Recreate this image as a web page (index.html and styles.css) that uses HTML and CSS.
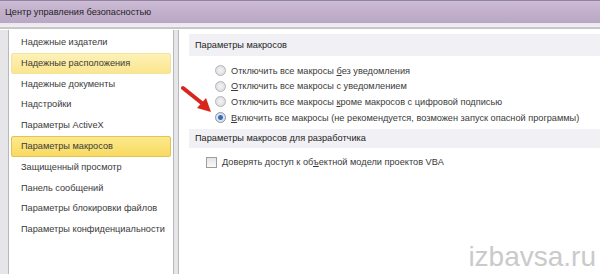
FILE: index.html
```html
<!DOCTYPE html>
<html lang="ru">
<head>
    <meta charset="UTF-8">
    <title>Центр управления безопасностью</title>
    <link rel="stylesheet" href="styles.css">
</head>
<body>
    <div class="window">
        <div class="titlebar">Центр управления безопасностью</div>
        <div class="strip"></div>
        <div class="body">
            <ul class="sidebar">
                <li>Надежные издатели</li>
                <li class="hover">Надежные расположения</li>
                <li>Надежные документы</li>
                <li>Надстройки</li>
                <li>Параметры ActiveX</li>
                <li class="active">Параметры макросов</li>
                <li>Защищенный просмотр</li>
                <li>Панель сообщений</li>
                <li>Параметры блокировки файлов</li>
                <li>Параметры конфиденциальности</li>
            </ul>
            <div class="main">
                <div class="section-title">Параметры макросов</div>
                <div class="options">
                    <label class="radio"><span class="dot"></span><span>Отключить все макросы <u>б</u>ез уведомления</span></label>
                    <label class="radio"><span class="dot"></span><span><u>О</u>тключить все макросы с уведомлением</span></label>
                    <label class="radio"><span class="dot"></span><span>Отключить все макросы <u>к</u>роме макросов с цифровой подписью</span></label>
                    <label class="radio checked"><span class="dot"></span><span><u>В</u>ключить все макросы (не рекомендуется, возможен запуск опасной программы)</span></label>
                </div>
                <div class="section-title small">Параметры макросов для разработчика</div>
                <div class="options dev">
                    <label class="check"><span class="box"></span><span>Доверять доступ к об<u>ъ</u>ектной модели проектов VBA</span></label>
                </div>
                <!-- красная стрелка поверх содержимого -->
                <svg class="arrow" width="34" height="30" viewBox="0 0 34 30">
                    <path d="M2 3 L22 19" stroke="#d8261c" stroke-width="4" stroke-linecap="round"/>
                    <path d="M16 23 L30 27 L25 13 Z" fill="#d8261c"/>
                </svg>
                <div class="watermark">izbavsa.ru</div>
            </div>
        </div>
    </div>
</body>
</html>
```

FILE: styles.css
```css
body {
    margin: 0;
    padding: 0;
    font-family: "Liberation Sans", Arial, sans-serif;
    font-size: 9.2px;
    color: #2b2b2b;
    overflow: hidden;
}
.window {
    width: 600px;
    height: 274px;
    display: flex;
    flex-direction: column;
    background-color: #dcd8e0;
}
.titlebar {
    height: 23px;
    line-height: 25px;
    padding-left: 5px;
    font-size: 9.2px;
    color: #1e1e1e;
    background: linear-gradient(#5a4a68 0, #cdbcd6 1px, #c2b0cc 50%, #b9a8c3 100%);
}
.strip {
    height: 7px;
    background: linear-gradient(#ece6ef 0, #f2eef4 4px, #c8c8c8 4px, #c8c8c8 6px, #fdfdfd 6px);
}
.body {
    flex: 1;
    display: flex;
    gap: 4px;
    padding-left: 8px;
    background-color: #e6e6e8;
}
.sidebar {
    list-style: none;
    margin: 0;
    padding: 2px 2px 0;
    width: 160px;
    background-color: #fff;
    border-left: 1px solid #b8b8bc;
    border-right: 1px solid #b8b8bc;
}
.sidebar li {
    height: 18.8px;
    line-height: 19px;
    padding-left: 9px;
    border: 1px solid transparent;
    border-radius: 2px;
    color: #3a3a3a;
}
.sidebar li.hover {
    background: linear-gradient(#fdf1b6, #fbe68e);
    border-color: #f4e3a0;
}
.sidebar li.active {
    background: linear-gradient(#fce98c, #f8da62);
    border-color: #e3c453;
}
.main {
    position: relative;
    flex: 1;
    background-color: #fff;
    border-left: 1px solid #b8b8bc;
    padding: 4px 0 0 10px;
}
.section-title {
    height: 22px;
    line-height: 22px;
    padding-left: 6px;
    background-color: #f1f1f5;
    color: #222;
}
.section-title.small {
    height: 19px;
    line-height: 19px;
}
.options {
    display: flex;
    flex-direction: column;
    padding: 7px 0 4px 26px;
}
.radio, .check {
    display: flex;
    align-items: center;
    gap: 5px;
    height: 15.6px;
    color: #3a3a3a;
}
.dot {
    width: 9px;
    height: 9px;
    border-radius: 50%;
    border: 1px solid #b4b4b8;
    background: radial-gradient(#f4f4f6, #d8d8dc);
}
.radio.checked .dot {
    border-color: #8a96aa;
    background: radial-gradient(circle, #3a6fb8 0, #3a6fb8 2px, #dfe6f2 3px, #cdd4e0 100%);
}
.options.dev {
    padding: 6px 0 0 17px;
}
.box {
    width: 9px;
    height: 9px;
    border: 1px solid #9c9ca0;
    background: linear-gradient(#e4e4e8, #fafafa);
}
.arrow {
    position: absolute;
    left: 2px;
    top: 55px;
}
.watermark {
    position: absolute;
    right: 4px;
    bottom: 1px;
    font-size: 28px;
    color: #cacaca;
}
```
